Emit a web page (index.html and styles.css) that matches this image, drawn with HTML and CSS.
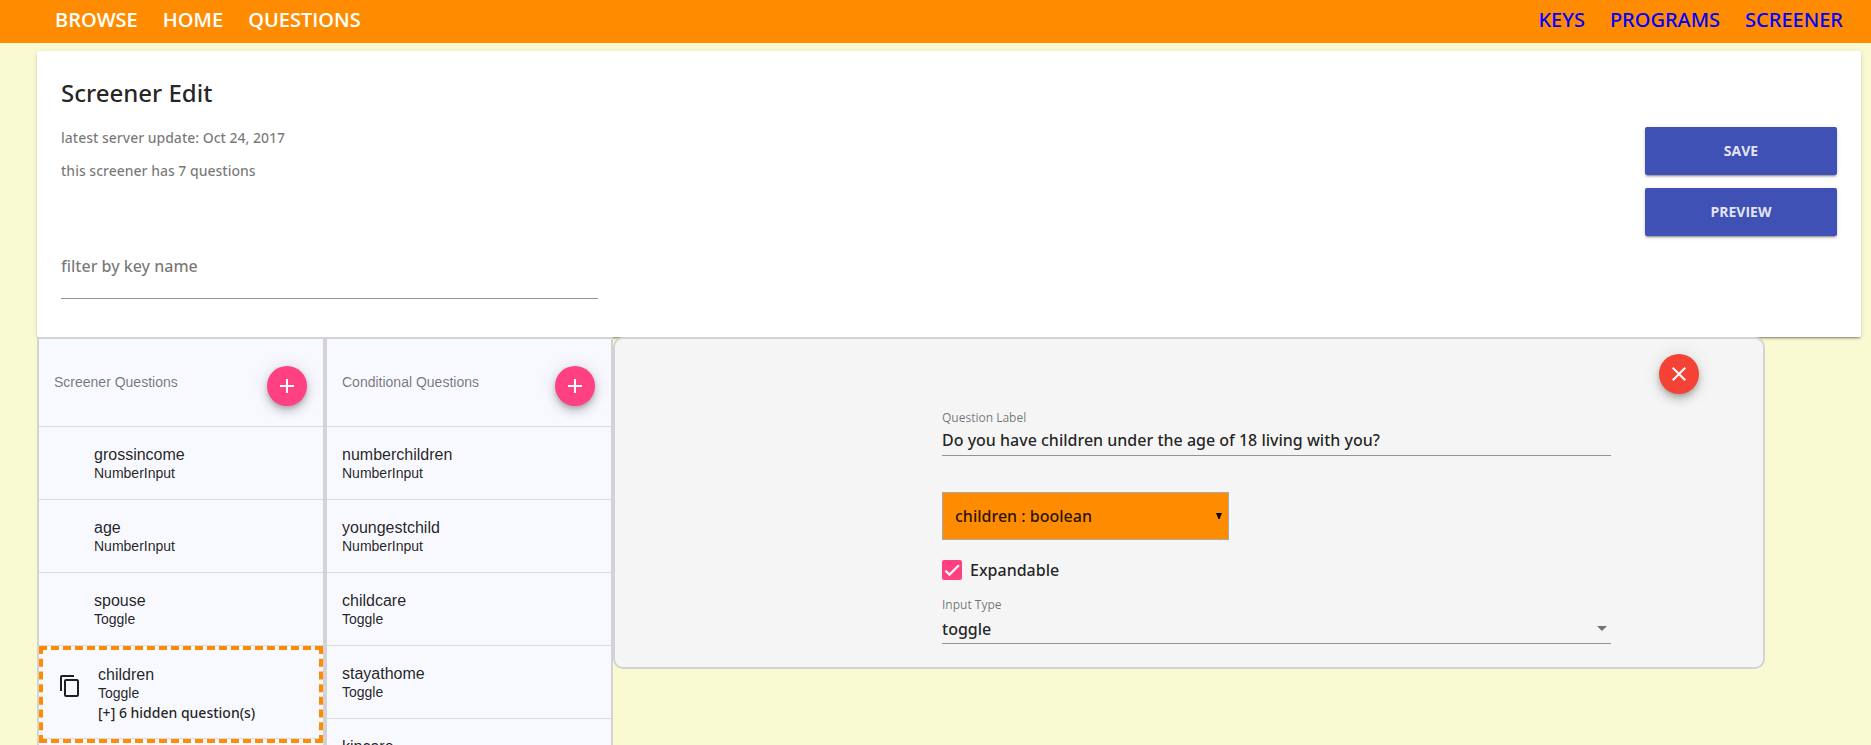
FILE: index.html
```html
<!DOCTYPE html>
<html lang="en">
<head>
<meta charset="utf-8">
<title>Screener Edit</title>
<link rel="stylesheet" href="styles.css">
</head>
<body>
<div class="app">
  <header class="toolbar">
    <nav class="nav nav-primary" aria-label="Site">
      <a href="#browse">BROWSE</a>
      <a href="#home">HOME</a>
      <a href="#questions">QUESTIONS</a>
    </nav>
    <nav class="nav nav-admin" aria-label="Admin">
      <a href="#keys">KEYS</a>
      <a href="#programs">PROGRAMS</a>
      <a href="#screener">SCREENER</a>
    </nav>
  </header>

  <main class="page">
    <section class="card">
      <h1 class="card-title">Screener Edit</h1>
      <div class="card-row">
        <div class="info">
          <p>latest server update: Oct 24, 2017</p>
          <p>this screener has 7 questions</p>
        </div>
        <div class="actions">
          <button class="raised" type="button">SAVE</button>
          <button class="raised" type="button">PREVIEW</button>
        </div>
      </div>
      <input class="filter" type="text" placeholder="filter by key name" aria-label="filter by key name">
    </section>

    <div class="workspace">
      <section class="panel">
        <div class="panel-head">
          <h2>Screener Questions</h2>
          <button class="fab fab-add" type="button" aria-label="Add screener question">
            <svg viewBox="0 0 24 24"><path d="M19 13h-6v6h-2v-6H5v-2h6V5h2v6h6v2z"/></svg>
          </button>
        </div>
        <ul class="list">
          <li class="item indented"><div class="item-text"><h3>grossincome</h3><p>NumberInput</p></div></li>
          <li class="item indented"><div class="item-text"><h3>age</h3><p>NumberInput</p></div></li>
          <li class="item indented"><div class="item-text"><h3>spouse</h3><p>Toggle</p></div></li>
          <li class="selected">
            <div class="item item-tall">
              <svg class="copy" viewBox="0 0 24 24"><path d="M16 1H4c-1.1 0-2 .9-2 2v14h2V3h12V1zm3 4H8c-1.1 0-2 .9-2 2v14c0 1.100.9 2 2 2h11c1.100 0 2-.9 2-2V7c0-1.100-.9-2-2-2zm0 16H8V7h11v14z"/></svg>
              <div class="item-text"><h3>children</h3><p>Toggle</p><p class="hidden-count">[+] 6 hidden question(s)</p></div>
            </div>
          </li>
        </ul>
      </section>

      <section class="panel">
        <div class="panel-head">
          <h2>Conditional Questions</h2>
          <button class="fab fab-add" type="button" aria-label="Add conditional question">
            <svg viewBox="0 0 24 24"><path d="M19 13h-6v6h-2v-6H5v-2h6V5h2v6h6v2z"/></svg>
          </button>
        </div>
        <ul class="list">
          <li class="item"><div class="item-text"><h3>numberchildren</h3><p>NumberInput</p></div></li>
          <li class="item"><div class="item-text"><h3>youngestchild</h3><p>NumberInput</p></div></li>
          <li class="item"><div class="item-text"><h3>childcare</h3><p>Toggle</p></div></li>
          <li class="item"><div class="item-text"><h3>stayathome</h3><p>Toggle</p></div></li>
          <li class="item"><div class="item-text"><h3>kincare</h3><p>Toggle</p></div></li>
        </ul>
      </section>

      <section class="editor">
        <form class="form">
          <label class="caption" for="question-label">Question Label</label>
          <input class="field" id="question-label" type="text" value="Do you have children under the age of 18 living with you?">
          <div class="key-select">
            <select aria-label="Key"><option>children : boolean</option></select>
            <svg class="key-arrow" viewBox="0 0 6 6"><path d="M0 0h6L3.500 6h-1z"/></svg>
          </div>
          <div class="check-row">
            <span class="check">
              <input type="checkbox" id="expandable" checked>
              <svg viewBox="0 0 24 24"><path d="M4.100 12.700 9 17.600 20.300 6.300"/></svg>
            </span>
            <label for="expandable">Expandable</label>
          </div>
          <label class="caption" for="input-type">Input Type</label>
          <div class="type-select">
            <select id="input-type"><option>toggle</option></select>
            <svg class="type-arrow" viewBox="0 0 10 5"><path d="M0 0h10L5 5z"/></svg>
          </div>
        </form>
        <button class="fab fab-close" type="button" aria-label="Close question">
          <svg viewBox="0 0 24 24"><path d="M19 6.410 17.590 5 12 10.590 6.410 5 5 6.410 10.590 12 5 17.590 6.410 19 12 13.410 17.590 19 19 17.590 13.410 12z"/></svg>
        </button>
      </section>
    </div>
  </main>
</div>
</body>
</html>
```

FILE: styles.css
```css
* { box-sizing: border-box; }

body {
  margin: 0;
  background: #fafad2;
  color: rgba(0, 0, 0, 0.87);
  font-family: "Noto Sans", "Open Sans", sans-serif;
  font-weight: 500;
}

h1, h2, h3, p, ul { margin: 0; padding: 0; }
ul { list-style: none; }
button, input, select { font: inherit; color: inherit; }

.app {
  height: 100vh;
  overflow: hidden;
}

/* toolbar */
.toolbar {
  display: flex;
  justify-content: space-between;
  padding: 6px 28px 10px 55px;
  background: #ff8c00;
  font-size: 20px;
  line-height: 27px;
}
.nav { display: flex; gap: 25px; }
.nav a { text-decoration: none; }
.nav-primary { font-family: "Open Sans", "Noto Sans", sans-serif; }
.nav-primary a { color: #fff; font-weight: 600; }
.nav-admin a { color: #00f; }

.page { padding: 8px 10px 0 37px; }

/* summary card */
.card {
  padding: 24px 24px 38px;
  background: #fff;
  border-radius: 2px;
  box-shadow: 0 3px 1px -2px rgba(0, 0, 0, 0.2), 0 2px 2px 0 rgba(0, 0, 0, 0.14), 0 1px 5px 0 rgba(0, 0, 0, 0.12);
}
.card-title {
  font-size: 24px;
  font-weight: 500;
  line-height: 36px;
}
.card-row {
  display: flex;
  justify-content: space-between;
  align-items: flex-start;
  padding-top: 16px;
}
.info {
  display: flex;
  flex-direction: column;
  gap: 11px;
  font-size: 14px;
  line-height: 22px;
  color: rgba(0, 0, 0, 0.54);
}
.actions {
  display: flex;
  flex-direction: column;
  gap: 13px;
  width: 192px;
}
.raised {
  height: 48px;
  padding: 0 16px 2px;
  border: 0;
  border-radius: 2px;
  background: #3f51b5;
  color: rgba(255, 255, 255, 0.87);
  font-family: "Open Sans", "Noto Sans", sans-serif;
  font-size: 14px;
  font-weight: 700;
  box-shadow: 0 3px 1px -2px rgba(0, 0, 0, 0.2), 0 2px 2px 0 rgba(0, 0, 0, 0.14), 0 1px 5px 0 rgba(0, 0, 0, 0.12);
}
.filter {
  display: block;
  width: 537px;
  max-width: 100%;
  margin-top: 18px;
  padding: 0 0 20px;
  border: 0;
  border-bottom: 1px solid #949494;
  background: transparent;
  font-size: 16px;
  line-height: 24px;
  outline: 0;
}
.filter::placeholder { color: rgba(0, 0, 0, 0.54); }

/* workspace columns */
.workspace {
  position: relative;
  display: grid;
  grid-template-columns: 1fr 1fr 4fr;
  align-items: start;
  padding-right: 96px;
}
.panel {
  min-height: 480px;
  border: 2px solid #d3d3d3;
  background: #f8f8ff;
  font-family: "Liberation Sans", Arial, sans-serif;
  font-weight: 400;
}
.panel-head {
  display: flex;
  align-items: center;
  justify-content: space-between;
  height: 88px;
  padding: 0 16px 2px 15px;
  border-bottom: 1px solid rgba(0, 0, 0, 0.12);
}
.panel-head h2 {
  font-size: 14px;
  font-weight: 400;
  line-height: 20px;
  color: rgba(0, 0, 0, 0.54);
}

.fab {
  display: flex;
  align-items: center;
  justify-content: center;
  width: 40px;
  height: 40px;
  padding: 0;
  border: 0;
  border-radius: 50%;
  box-shadow: 0 3px 5px -1px rgba(0, 0, 0, 0.2), 0 6px 10px 0 rgba(0, 0, 0, 0.14), 0 1px 18px 0 rgba(0, 0, 0, 0.12);
}
.fab svg { width: 24px; height: 24px; fill: #fff; }
.fab-add { margin-top: 8px; background: #ff4081; }
.fab-close { margin: 15px 0 0 48px; background: #f44336; }

.item {
  display: flex;
  align-items: center;
  gap: 16px;
  height: 73px;
  padding: 0 15px;
  border-bottom: 1px solid rgba(0, 0, 0, 0.12);
}
.item h3 { font-size: 16px; font-weight: 400; line-height: 20px; }
.item p { font-size: 14px; line-height: 16px; }
.indented { padding-left: 55px; }
.selected { border: 4px dashed #ff8c00; }
.item-tall { height: 89px; }
.copy { width: 24px; height: 24px; margin-bottom: 16px; fill: rgba(0, 0, 0, 0.87); }
.item .hidden-count {
  font-family: "Noto Sans", "Open Sans", sans-serif;
  font-weight: 500;
  line-height: 23px;
}

/* question editor */
.editor {
  display: grid;
  grid-template-columns: 327fr 669fr 152fr;
  align-items: start;
  border: 2px solid #d3d3d3;
  border-radius: 10px;
  background: #f5f5f5;
}
.form {
  grid-column: 2;
  display: flex;
  flex-direction: column;
  padding: 70px 0 23px;
  font-size: 16px;
}
.caption {
  font-family: "Open Sans", "Noto Sans", sans-serif;
  font-size: 12px;
  line-height: 18px;
  color: rgba(0, 0, 0, 0.54);
}
.field {
  height: 25px;
  margin-top: 4px;
  padding: 0 0 6px;
  border: 0;
  border-bottom: 1px solid #949494;
  background: transparent;
  line-height: 18px;
  outline: 0;
}
.key-select {
  position: relative;
  width: 287px;
  margin-top: 36px;
}
.key-select select {
  display: block;
  width: 100%;
  height: 48px;
  padding: 0 12px;
  border: 1px solid #a9a9a9;
  border-radius: 0;
  background: #ff8c00;
  appearance: none;
}
.key-arrow {
  position: absolute;
  top: 21px;
  right: 7px;
  width: 6px;
  height: 6px;
}
.check-row {
  display: flex;
  align-items: center;
  gap: 8px;
  height: 20px;
  margin: 20px 0 16px;
}
.check { position: relative; width: 20px; height: 20px; }
.check input {
  display: block;
  width: 20px;
  height: 20px;
  margin: 0;
  border-radius: 2px;
  background: #ff4081;
  appearance: none;
}
.check svg {
  position: absolute;
  inset: 0;
  width: 20px;
  height: 20px;
  fill: none;
  stroke: #f5f5f5;
  stroke-width: 2.700;
  pointer-events: none;
}
.type-select { position: relative; margin-top: 2px; }
.type-select select {
  display: block;
  width: 100%;
  height: 28px;
  padding: 1px 0 3px;
  border: 0;
  border-bottom: 1px solid #949494;
  border-radius: 0;
  background: transparent;
  appearance: none;
}
.type-arrow {
  position: absolute;
  top: 10px;
  right: 4px;
  width: 10px;
  height: 5px;
  fill: #757575;
}
.key-arrow, .type-arrow { pointer-events: none; }
```
